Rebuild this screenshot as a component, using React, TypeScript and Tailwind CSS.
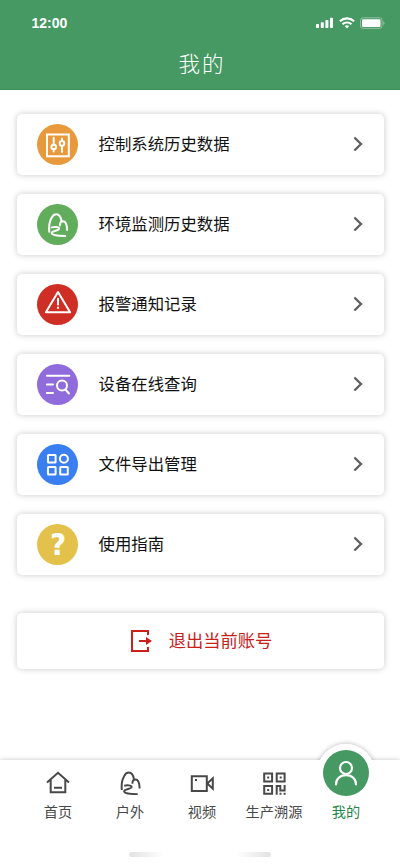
import type { ReactNode } from "react"

type MenuItem = {
  label: string
  color: string
  icon: ReactNode
}

type TabItem = {
  label: string
  icon: ReactNode
}

function HillPaths() {
  return (
    <>
      <path d="M3.8 19C3.3 14 4.300 8.300 6 5.400 7.200 2.800 8.800 1.500 10.800 1.500c2.800 0 4.600 3 5.200 6.900" />
      <path d="M14.400 12.800c0-2.700 1.300-4.300 3.100-4.300 2.700 0 4 3.700 4.100 8.900" />
      <path d="M6.200 14.700C9 14 13.300 14.100 13.600 16c.3 2-7.400 2-7.500 4.200-.1 2.400 6 2.800 13.600 3" />
    </>
  )
}

function CircleIcon({ children }: { children: ReactNode }) {
  return (
    <svg
      viewBox="0 0 41 41"
      className="h-[41px] w-[41px]"
      fill="none"
      stroke="#fff"
      strokeWidth="2"
      strokeLinecap="round"
      strokeLinejoin="round"
    >
      {children}
    </svg>
  )
}

function TabIcon({ children }: { children: ReactNode }) {
  return (
    <svg viewBox="0 0 24 24" className="h-6 w-6" fill="none" stroke="#484848" strokeWidth="2">
      {children}
    </svg>
  )
}

const menuItems: MenuItem[] = [
  {
    label: "控制系统历史数据",
    color: "bg-[#e8993b]",
    icon: (
      <CircleIcon>
        <rect x="10" y="10.500" width="21.800" height="21.800" strokeLinejoin="miter" />
        <path d="M16.700 13.800v6.600M16.700 25.600v1.800M25 14.500v2.400M25 22.100v5.800" />
        <circle cx="16.700" cy="23" r="2.300" />
        <circle cx="25" cy="19.400" r="2.300" />
      </CircleIcon>
    ),
  },
  {
    label: "环境监测历史数据",
    color: "bg-[#62ad5c]",
    icon: (
      <CircleIcon>
        <g transform="translate(8.500 8.700)">
          <HillPaths />
        </g>
      </CircleIcon>
    ),
  },
  {
    label: "报警通知记录",
    color: "bg-[#cf2e24]",
    icon: (
      <CircleIcon>
        <path d="M21 8 33.100 28.300H8.900Z" />
        <path d="M21 14v7.200M21 22.800v2" strokeLinecap="butt" />
      </CircleIcon>
    ),
  },
  {
    label: "设备在线查询",
    color: "bg-[#906bdc]",
    icon: (
      <CircleIcon>
        <path d="M9.900 11.800h22.400M9.900 20.400h6.100M9.900 29h6.100M28.600 25.600l3.300 3.900" />
        <circle cx="25" cy="21.600" r="5" />
      </CircleIcon>
    ),
  },
  {
    label: "文件导出管理",
    color: "bg-[#3a7ff2]",
    icon: (
      <CircleIcon>
        <rect x="11" y="11" width="7.600" height="7.600" rx=".6" />
        <circle cx="26.900" cy="14.800" r="4" />
        <rect x="11" y="23" width="7.600" height="7.600" rx=".6" />
        <rect x="23.200" y="23" width="7.600" height="7.600" rx=".6" />
      </CircleIcon>
    ),
  },
  {
    label: "使用指南",
    color: "bg-[#e3c14a]",
    icon: (
      <span className="scale-x-90 font-['DejaVu_Sans'] text-[31px] leading-[41px] font-bold text-white">?</span>
    ),
  },
]

const tabs: TabItem[] = [
  {
    label: "首页",
    icon: (
      <TabIcon>
        <path d="M1 11.400 12 1.800l11 9.600M4.700 9v12.200h14.600V9M8 16.700h8" />
      </TabIcon>
    ),
  },
  {
    label: "户外",
    icon: (
      <TabIcon>
        <HillPaths />
      </TabIcon>
    ),
  },
  {
    label: "视频",
    icon: (
      <TabIcon>
        <path d="M1.800 5.200h15v14.700h-15ZM17.300 12.500l5.500-5.200v10.400Z" />
        <path d="M5 9h2" />
      </TabIcon>
    ),
  },
  {
    label: "生产溯源",
    icon: (
      <TabIcon>
        <path d="M2.200 2.500h7.900v7.900H2.200ZM14.700 2.500h7.900v7.900h-7.900ZM2.200 14.900h7.900v7.900H2.200Z" />
        <path d="M5.200 6.500h2M17.700 6.500h2M5.200 18.900h2" />
        <path d="M14.700 23.700v-8.800h3.600v4.500h4.300v-5.400M17.500 22.800h2M21.600 22.800h2" />
      </TabIcon>
    ),
  },
]

function StatusBar() {
  return (
    <div className="flex h-[45px] items-center justify-between pr-[15px] pl-[31.500px] text-white">
      <span className="pt-px font-['Liberation_Sans'] text-[14px] font-bold">12:00</span>
      <div className="flex items-center gap-[5px]">
        <svg viewBox="0 0 18 12" className="h-3 w-[18px]" fill="currentColor">
          <rect x="0" y="7" width="3" height="4" rx=".7" />
          <rect x="4.800" y="5.300" width="3" height="5.700" rx=".7" />
          <rect x="9.400" y="3" width="3" height="8" rx=".7" />
          <rect x="14" y=".8" width="3" height="10.200" rx=".7" />
        </svg>
        <svg viewBox="0 0 16 12" className="h-3 w-4" fill="none" stroke="currentColor" strokeWidth="2.200">
          <path d="M.9 4.300C5 .5 11 .5 15.100 4.300M3.500 7.200c2.500-2.300 6.500-2.300 9 0" />
          <path d="M5.700 9c1.300-1.100 3.300-1.100 4.600 0L8 11.400Z" fill="currentColor" stroke="none" />
        </svg>
        <svg viewBox="0 0 25 12" className="h-3 w-[25px]" fill="none">
          <rect x=".5" y=".8" width="21.500" height="10.600" rx="2.600" stroke="#fff" strokeOpacity=".4" />
          <rect x="2" y="2.300" width="18.500" height="7.700" rx="1.300" fill="#fff" />
          <path d="M23.300 4.200v4c1.600-.7 1.600-3.300 0-4Z" fill="#fff" fillOpacity=".45" />
        </svg>
      </div>
    </div>
  )
}

export default function App() {
  return (
    <div className="flex h-[865px] w-[400px] flex-col overflow-hidden bg-white font-['Noto_Sans_CJK_SC',sans-serif]">
      <header className="h-[90px] border-b border-[#3b8c57] bg-[#469962]">
        <StatusBar />
        <h1 className="pl-[4px] text-center text-[21.500px] leading-9 font-light tracking-[2px] text-white">
          我的
        </h1>
      </header>

      <main className="flex flex-1 flex-col px-[16.500px] pt-6">
        <div className="flex flex-col gap-[19px]">
          {menuItems.map((item) => (
            <button
              key={item.label}
              className="flex h-[61px] w-full items-center rounded-[5px] bg-white px-[20.500px] shadow-[0_0_6px_rgba(0,0,0,0.22)]"
            >
              <span className={`flex h-[41px] w-[41px] items-center justify-center rounded-full ${item.color}`}>
                {item.icon}
              </span>
              <span className="-mt-[3px] ml-[20.500px] flex-1 text-left text-[16.400px] leading-6 text-[#111]">
                {item.label}
              </span>
              <svg viewBox="0 0 10 16" className="-mt-px h-4 w-2.5" fill="none" stroke="#5e5e5e" strokeWidth="2.300">
                <path d="M1.400 1.500 8 8l-6.600 6.500" />
              </svg>
            </button>
          ))}
        </div>

        <button className="mt-[38px] flex h-14 w-full items-center justify-center gap-[17px] rounded-[5px] bg-white pl-[3px] text-[#c9211a] shadow-[0_0_6px_rgba(0,0,0,0.22)]">
          <svg viewBox="0 0 21 22" className="h-[22px] w-[21px]" fill="none" stroke="currentColor" strokeWidth="2">
            <path d="M17 5V1H1v20h16v-4M8 11h8" />
            <path d="M15 7v8l6-4Z" fill="currentColor" stroke="none" />
          </svg>
          <span className="-mt-[2px] text-[17.300px] leading-6">退出当前账号</span>
        </button>
      </main>

      <nav className="relative h-[105px] bg-white shadow-[0_0_5px_rgba(0,0,0,0.22)]">
        <div className="absolute -top-4 left-[317px] h-[58px] w-[58px] rounded-full bg-white shadow-[0_0_5px_rgba(0,0,0,0.3)]" />
        <div className="relative flex h-full bg-white pl-[22px] text-[14.200px] leading-5 text-[#484848]">
          {tabs.map((tab) => (
            <button key={tab.label} className="flex w-[72px] flex-col items-center pt-[11px]">
              {tab.icon}
              <span className="mt-[6px] whitespace-nowrap">{tab.label}</span>
            </button>
          ))}
          <button className="flex w-[72px] flex-col items-center text-[#268648]">
            <span className="-mt-4 flex h-[58px] w-[58px] items-center justify-center rounded-full bg-white">
              <svg viewBox="0 0 46 46" className="h-[46px] w-[46px]" fill="none" stroke="#fff" strokeWidth="2.200">
                <circle cx="23" cy="23" r="23" fill="#469962" stroke="none" />
                <circle cx="23" cy="18" r="6" />
                <path d="M13 34.500c0-5.500 4-9.400 10-9.400s10 3.900 10 9.400" strokeLinecap="round" />
              </svg>
            </span>
            <span className="-mt-px">我的</span>
          </button>
        </div>
        <div className="absolute bottom-2 left-[129px] h-[5px] w-[142px] rounded-full bg-linear-to-r from-[#e2e2e2] via-transparent via-25% to-transparent" />
        <div className="absolute bottom-2 left-[129px] h-[5px] w-[142px] rounded-full bg-linear-to-l from-[#e2e2e2] via-transparent via-25% to-transparent" />
      </nav>
    </div>
  )
}
